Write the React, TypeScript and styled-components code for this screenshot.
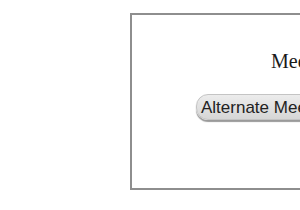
import styled, { createGlobalStyle } from "styled-components";

const GlobalStyle = createGlobalStyle`
  html, body {
    margin: 0;
    padding: 0;
    background: #ffffff;
    overflow: hidden;
  }
`;

const Page = styled.div`
  width: 300px;
  height: 210px;
  overflow: hidden;
  padding: 13px 0 0 130px;
  box-sizing: border-box;
`;

const Panel = styled.div`
  width: 320px;
  height: 177px;
  box-sizing: border-box;
  border: 2px solid #8e8e8e;
  display: flex;
  flex-direction: column;
  padding-top: 36px;
`;

const Title = styled.div`
  font-family: "Liberation Serif", "Times New Roman", serif;
  font-size: 20px;
  line-height: 1;
  color: #1a1a1a;
  padding-left: 139px;
  white-space: nowrap;
`;

const Row = styled.div`
  display: flex;
  margin-top: 23px;
  padding-left: 64px;
`;

const PillButton = styled.button`
  font-family: "Liberation Sans", Arial, sans-serif;
  font-size: 17px;
  line-height: 1;
  color: #222;
  white-space: nowrap;
  padding: 4px 14px 3px 4px;
  border: 1px solid #c4c4c4;
  border-radius: 12px;
  background: linear-gradient(#ececec, #d6d6d6);
  box-shadow: 0 2px 1px #9a9a9a;
  cursor: pointer;
`;

export default function App() {
  return (
    <>
      <GlobalStyle />
      <Page>
        <Panel>
          <Title>Meeting Options</Title>
          <Row>
            <PillButton>Alternate Meeting Times</PillButton>
          </Row>
        </Panel>
      </Page>
    </>
  );
}
